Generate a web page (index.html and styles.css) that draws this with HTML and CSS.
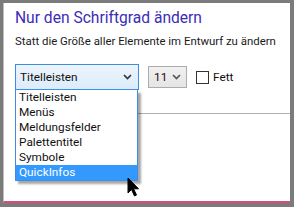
FILE: index.html
```html
<!DOCTYPE html>
<html>
<head>
<meta charset="utf-8">
<link rel="stylesheet" href="styles.css">
</head>
<body>
<div class="frame">
  <div class="panel">
    <h1 class="title">Nur den Schriftgrad ändern</h1>
    <p class="subtitle">Statt die Größe aller Elemente im Entwurf zu ändern</p>
    <div class="controls">
      <div class="dropdown">
        <div class="select select-open">
          <span>Titelleisten</span>
          <svg class="chev" width="9" height="6" viewBox="0 0 9 6"><path d="M1 1 L4.5 4.5 L8 1" fill="none" stroke="#333" stroke-width="1.7"/></svg>
        </div>
        <ul class="list">
          <li>Titelleisten</li>
          <li>Menüs</li>
          <li>Meldungsfelder</li>
          <li>Palettentitel</li>
          <li>Symbole</li>
          <li class="sel">QuickInfos</li>
        </ul>
      </div>
      <div class="select select-size">
        <span>11</span>
        <svg class="chev" width="9" height="6" viewBox="0 0 9 6"><path d="M1 1 L4.5 4.5 L8 1" fill="none" stroke="#555" stroke-width="1.7"/></svg>
      </div>
      <label class="check"><span class="box"></span>Fett</label>
    </div>
    <div class="rule"></div>
    <svg class="cursor" width="14" height="21" viewBox="0 0 14 21"><path d="M1 1 L1 16 L4.5 12.5 L7.5 19 L9.5 18 L6.6 11.8 L11.5 11.8 Z" fill="#000" stroke="#000" stroke-width="1" stroke-linejoin="round"/></svg>
  </div>
</div>
</body>
</html>
```
FILE: styles.css
```css
* { box-sizing: border-box; }
html, body { margin: 0; padding: 0; }
body { width: 294px; height: 207px; overflow: hidden; font-family: "Roboto", "Noto Sans", sans-serif; }
.frame {
  width: 294px; height: 207px;
  background: #7b7b7b;
  padding: 3px 4px 4px 3px;
}
.panel {
  position: relative;
  height: 200px;
  background: #fff;
  border-bottom: 2px solid #dd4a80;
  border-left: 1px solid #bdbdbd;
  padding: 0 0 0 11px;
  display: flex;
  flex-direction: column;
}
.title {
  margin: 5px 0 0 0;
  font-size: 15.6px;
  font-weight: 400;
  line-height: 20px;
  color: #3a2db8;
  white-space: nowrap;
}
.subtitle {
  margin: 5px 0 0 0;
  font-size: 11.4px;
  line-height: 16px;
  color: #1a1a1a;
  white-space: nowrap;
}
.controls {
  margin-top: 15px;
  display: flex;
  align-items: center;
  height: 26px;
}
.dropdown {
  position: relative;
}
.select {
  display: flex;
  align-items: center;
  justify-content: space-between;
  font-size: 11.8px;
  color: #111;
}
.select-open {
  width: 124px;
  height: 26px;
  border: 1px solid #3c8fe0;
  background: linear-gradient(#ecf4fc, #dcecfc);
  padding: 0 6px 0 4px;
}
.select-size {
  margin-left: 9px;
  width: 39px;
  height: 22px;
  border: 1px solid #acacac;
  background: linear-gradient(#f0f0f0, #e5e5e5);
  padding: 0 5px 0 5px;
  color: #2a0a0a;
}
.check {
  margin-left: 9px;
  display: flex;
  align-items: center;
  font-size: 11.8px;
  color: #111;
}
.box {
  width: 13px; height: 13px;
  border: 1px solid #333;
  background: #fff;
  margin-right: 4px;
}
.rule {
  margin-top: 23px;
  height: 1px;
  background: #b0b0b0;
}
.list {
  position: absolute;
  left: 0; top: 100%;
  width: 123px;
  margin: 0; padding: 0;
  list-style: none;
  border: 1px solid #3c8fe0;
  border-top: none;
  background: #fff;
  box-shadow: 3px 3px 2px rgba(0,0,0,0.35);
  font-size: 11.8px;
  color: #111;
  z-index: 2;
}
.list li {
  height: 15px;
  line-height: 15px;
  padding-left: 3px;
}
.list li.sel {
  background: #3399ff;
  color: #fff;
}
.cursor {
  position: absolute;
  left: 123px; top: 174px;
  z-index: 3;
}
```
